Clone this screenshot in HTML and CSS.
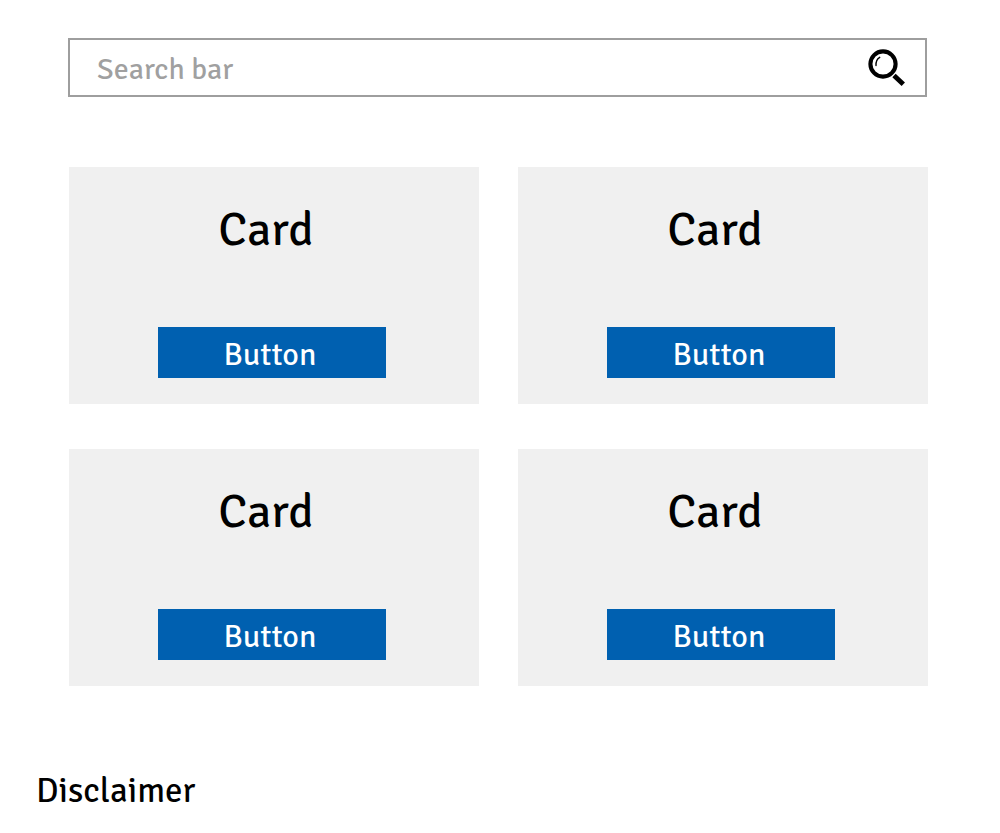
FILE: index.html
```html
<!DOCTYPE html>
<html lang="en">
<head>
<meta charset="utf-8">
<meta name="viewport" content="width=device-width, initial-scale=1">
<title>Cards</title>
<link rel="stylesheet" href="styles.css">
</head>
<body>
<main class="content">
  <form class="search" role="search">
    <input class="search-input" type="search" placeholder="Search bar" aria-label="Search bar">
    <button class="search-button" type="submit" aria-label="Search">
      <svg class="search-icon" viewBox="0 0 38 38" fill="none" stroke="#000" aria-hidden="true">
        <circle cx="15" cy="15" r="12.6" stroke-width="4.1"/>
        <path d="M8 16.5C7.7 12.5 9 10 11.7 8.3" stroke-width="1.4" stroke-linecap="round"/>
        <path d="M26 26.5L35.3 35.3" stroke-width="4.8"/>
      </svg>
    </button>
  </form>
  <div class="cards">
    <section class="card"><h2 class="card-title">Card</h2><button class="card-button" type="button">Button</button></section>
    <section class="card"><h2 class="card-title">Card</h2><button class="card-button" type="button">Button</button></section>
    <section class="card"><h2 class="card-title">Card</h2><button class="card-button" type="button">Button</button></section>
    <section class="card"><h2 class="card-title">Card</h2><button class="card-button" type="button">Button</button></section>
  </div>
</main>
<footer class="disclaimer">Disclaimer</footer>
</body>
</html>
```
FILE: styles.css
```css
* {
  box-sizing: border-box;
}

body {
  margin: 0;
  background: #fff;
  color: #000;
  font-family: "Signika Negative", "Noto Sans", sans-serif;
  font-weight: 450;
}

.content {
  padding-top: 38px;
}

.search {
  display: flex;
  align-items: center;
  margin: 0 73px 0 68px;
  border: 2px solid #9e9e9e;
  padding: 0 19px 0 27px;
}

.search-input {
  flex: 1;
  min-width: 0;
  height: 55px;
  padding: 4px 0 0;
  border: 0;
  outline: 0;
  background: none;
  font: inherit;
  font-weight: 400;
  font-size: 30px;
  appearance: none;
}

.search-input::placeholder {
  color: #a0a0a0;
  opacity: 1;
}

.search-button {
  display: flex;
  padding: 0;
  border: 0;
  background: none;
}

.search-icon {
  width: 38px;
  height: 38px;
}

.cards {
  display: grid;
  grid-template-columns: 1fr 1fr;
  gap: 45px 39px;
  margin: 70px 72px 0 69px;
}

.card {
  display: flex;
  flex-direction: column;
  align-items: center;
  gap: 67px;
  padding: 33px 4px 26px 0;
  background: #f0f0f0;
}

.card-title {
  margin: 0;
  padding-right: 12px;
  font-weight: 450;
  font-size: 48px;
  line-height: 60px;
}

.card-button {
  width: 228px;
  max-width: 100%;
  padding: 8px 4px 3px 0;
  border: 0;
  background: #0060b0;
  color: #fff;
  font: inherit;
  font-size: 32px;
  line-height: 40px;
}

.disclaimer {
  padding: 83px 36px 19px;
  font-size: 35px;
  line-height: 44px;
}
```
